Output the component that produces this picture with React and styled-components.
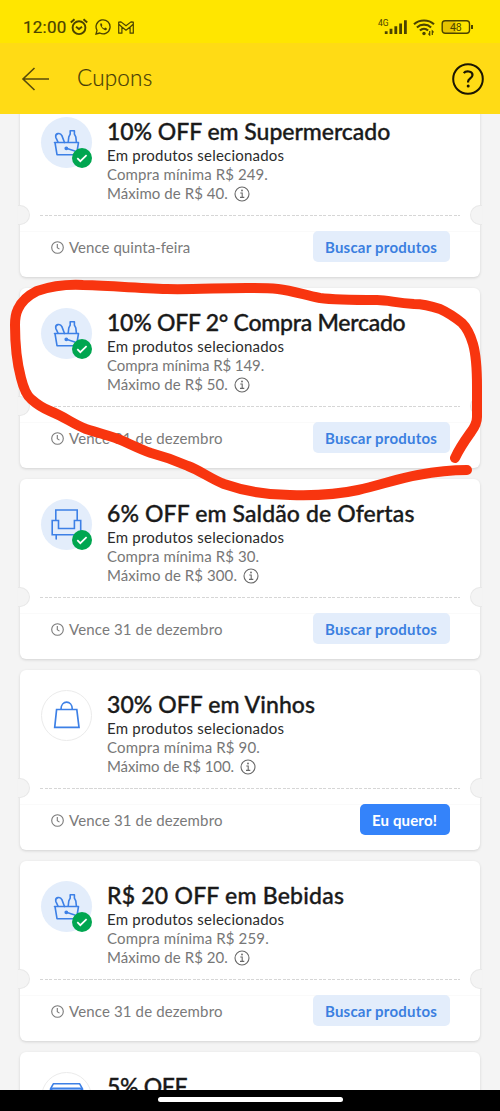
import React from 'react';
import styled, { createGlobalStyle } from 'styled-components';

const GlobalStyle = createGlobalStyle`
  * { box-sizing: border-box; }
  html, body { margin: 0; padding: 0; }
  body { background: #f4f4f4; font-family: Lato, "Liberation Sans", sans-serif; overflow: hidden; }
`;

const Screen = styled.div`
  position: relative;
  width: 500px;
  height: 1111px;
  display: flex;
  flex-direction: column;
  overflow: hidden;
  background: #f4f4f4;
`;

const StatusBar = styled.div`
  height: 43px;
  flex: none;
  display: flex;
  justify-content: space-between;
  padding: 15px 26px 0 23px;
  background: #ffe600;
`;

const StatusGroup = styled.div`
  display: flex;
  height: 24px;
  align-items: center;
`;

const Time = styled.span`
  width: 47px;
  font: 400 17px/24px Roboto, sans-serif;
  letter-spacing: 0.25px;
  color: #4b4300;
  -webkit-text-stroke: 0.2px #4b4300;
`;

const StatusIcon = styled.svg`
  display: block;
  flex: none;
  margin-left: ${(p) => p.$gap || 0}px;
`;

const Header = styled.header`
  height: 71px;
  flex: none;
  display: flex;
  align-items: center;
  padding: 0 15px 0 21px;
  background: #ffdb15;
`;

const PageTitle = styled.h1`
  flex: 1;
  margin: -2px 0 0 27px;
  font-size: 22.5px;
  font-weight: 300;
  line-height: 30px;
  letter-spacing: 0.2px;
  color: #463c08;
  -webkit-text-stroke: 0.2px #463c08;
`;

const CouponList = styled.main`
  flex: 1;
  min-height: 0;
  overflow: hidden;
  display: flex;
  flex-direction: column;
  padding: 0 20px;
`;

const Card = styled.article`
  position: relative;
  flex: none;
  height: 180px;
  margin-bottom: 11px;
  background: #fff;
  border-radius: 6px;
  box-shadow: 0 1px 3px rgba(0, 0, 0, 0.14);
  &:first-child { margin-top: -17px; }
`;

const CardBody = styled.div`
  height: 118px;
  display: flex;
  padding: 20px 20px 0 21px;
`;

const Emblem = styled.div`
  position: relative;
  width: 51px;
  height: 51px;
  flex: none;
  display: flex;
  align-items: center;
  justify-content: center;
  border-radius: 50%;
  background: ${(p) => (p.$active ? '#e3edfb' : '#fff')};
  border: ${(p) => (p.$active ? '0' : '1px solid #ebebeb')};
`;

const Badge = styled.svg`
  position: absolute;
  right: 0;
  bottom: 0;
`;

const Details = styled.div`
  margin-left: 15px;
  white-space: nowrap;
`;

const CouponTitle = styled.h2`
  margin: 0 0 4px;
  font-size: 23px;
  font-weight: 500;
  line-height: 25px;
  height: 25px;
  padding-top: 2px;
  letter-spacing: ${(p) => p.$track || 0}px;
  color: #1a1a1a;
  -webkit-text-stroke: 0.35px #1a1a1a;
`;

const Line = styled.p`
  display: flex;
  align-items: center;
  margin: 0;
  font-size: 15px;
  line-height: 19px;
  letter-spacing: ${(p) => p.$track ?? 0.22}px;
  color: ${(p) => (p.$strong ? '#2b2b2b' : '#777')};
`;

const InfoIcon = styled.svg`
  margin-left: 6px;
`;

const Perforation = styled.div`
  height: 1px;
  margin: 0 20px;
  background: repeating-linear-gradient(90deg, #d6d6d6 0 3px, transparent 3px 4.5px);
`;

const Notch = styled.span`
  position: absolute;
  top: 108px;
  ${(p) => p.$side}: -3px;
  width: 13px;
  height: 20px;
  background: #f4f4f4;
  border: 1px solid #e8e8e8;
  border-${(p) => p.$side}: 0;
  border-radius: ${(p) => (p.$side === 'left' ? '0 10px 10px 0' : '10px 0 0 10px')};
  clip-path: ${(p) => (p.$side === 'left' ? 'inset(0 0 0 1px)' : 'inset(0 1px 0 0)')};
`;

const CardFooter = styled.footer`
  height: 46px;
  margin-top: 15px;
  border-top: 1px solid #fafafa;
  display: flex;
  align-items: flex-start;
  justify-content: space-between;
  padding: 0 31px 0 31px;
`;

const Expiry = styled.div`
  display: flex;
  align-items: center;
  gap: 5px;
  height: 30px;
  font-size: 15px;
  line-height: 20px;
  letter-spacing: ${(p) => p.$track}px;
  color: #7a7a7a;
`;

const ActionButton = styled.button`
  width: ${(p) => (p.$primary ? 90 : 137)}px;
  height: 31px;
  margin: -1px -0.5px 0 0;
  padding: 0;
  border: 0;
  border-radius: 5px;
  font: 700 15px/30px Lato, "Liberation Sans", sans-serif;
  letter-spacing: ${(p) => (p.$primary ? 0.15 : 0.22)}px;
  color: ${(p) => (p.$primary ? '#fff' : '#3b7fe0')};
  background: ${(p) => (p.$primary ? '#3483fa' : '#e3edfb')};
`;

const Scribble = styled.svg`
  position: absolute;
  inset: 0;
  pointer-events: none;
`;

const NavBar = styled.div`
  height: 21px;
  flex: none;
  display: flex;
  justify-content: center;
  padding-top: 7px;
  background: #000;
`;

const HomePill = styled.span`
  width: 185px;
  height: 5px;
  border-radius: 3px;
  background: #fff;
`;

const blue = { fill: 'none', stroke: '#3d80e6', strokeWidth: 1.6, strokeLinejoin: 'round', strokeLinecap: 'round' };

const Basket = () => (
  <svg width="51" height="51" viewBox="0 0 51 51" {...blue}>
    <path d="M13.5 25.5h24M14 25.5l2 12.2h19.5l2-12.2z" />
    <path d="M17 25.2l-2.2-4.9c-.9-4 4.4-5.2 6.1-1.7l2.6 6.9M27.2 25.2l.6-5.4 1.4-2.6v-3.5h4.2v3.5l1.4 2.6.6 5.4" />
    <path d="M25.3 31.3l8.5 2.6" />
    <circle cx="25.3" cy="31.3" r="1.1" fill="#3d80e6" />
  </svg>
);

const Armchair = () => (
  <svg width="51" height="51" viewBox="0 0 51 51" {...blue} strokeLinejoin="miter">
    <path d="M14.8 21.2V11h21.4v10.2M17.5 29.5v-8H11.2v14.2h28.5V21.5h-6.3v8zM15.2 36v4" />
  </svg>
);

const Bag = () => (
  <svg width="49" height="49" viewBox="0 0 49 49" {...blue} strokeWidth="1.7" strokeLinejoin="miter">
    <path d="M14.6 18.5h20.2l2.2 17.8H12.7zM19 18.3c0-9.5 11.3-9.5 11.3 0" />
  </svg>
);

const Store = () => (
  <svg width="49" height="49" viewBox="0 0 49 49" {...blue}>
    <path d="M12 21v15h25V21" />
    <path d="M10 15.3h29l1.5 4.7h-32z" fill="#83aef0" />
    <path d="M11.3 10.8h26.4l2.8 5v4.5H8.5v-4.5z" />
  </svg>
);

const icons = { basket: Basket, armchair: Armchair, bag: Bag, store: Store };

const Clock = () => (
  <svg width="13" height="13" viewBox="0 0 13 13" fill="none" stroke="#7a7a7a" strokeWidth="1.1">
    <circle cx="6.5" cy="6.5" r="5.8" />
    <path d="M6.3 3v3.8l2.2 1.3" />
  </svg>
);

const Info = () => (
  <InfoIcon width="16" height="16" viewBox="0 0 16 16" fill="none" stroke="#686868" strokeWidth="1.1">
    <circle cx="8" cy="8" r="7" />
    <path d="M6.3 7h1.9v4.3M6 11.4h4.3" />
    <circle cx="8" cy="4.5" r=".9" fill="#686868" stroke="none" />
  </InfoIcon>
);

const Check = () => (
  <Badge width="20" height="20" viewBox="0 0 20 20">
    <circle cx="10" cy="10" r="10" fill="#00a650" />
    <path d="M5.3 10.2l3 3 6.3-6.1" fill="none" stroke="#fff" strokeWidth="1.7" />
  </Badge>
);

const coupons = [
  { icon: 'basket', active: true, title: '10% OFF em Supermercado', min: 'Compra mínima R$ 249.', max: 'Máximo de R$ 40.', expiry: 'Vence quinta-feira', track: [-0.04, 0.1, 0.06, 0.05] },
  { icon: 'basket', active: true, title: '10% OFF 2° Compra Mercado', min: 'Compra mínima R$ 149.', max: 'Máximo de R$ 50.', expiry: 'Vence 31 de dezembro', track: [-0.26, -0.08, 0.06, 0.14] },
  { icon: 'armchair', active: true, title: '6% OFF em Saldão de Ofertas', min: 'Compra mínima R$ 30.', max: 'Máximo de R$ 300.', expiry: 'Vence 31 de dezembro', track: [0.11, 0.1, 0.08, 0.14] },
  { icon: 'bag', active: false, title: '30% OFF em Vinhos', min: 'Compra mínima R$ 90.', max: 'Máximo de R$ 100.', expiry: 'Vence 31 de dezembro', track: [0.06, 0.14, -0.1, 0.14] },
  { icon: 'basket', active: true, title: 'R$ 20 OFF em Bebidas', min: 'Compra mínima R$ 259.', max: 'Máximo de R$ 20.', expiry: 'Vence 31 de dezembro', track: [0.22, 0.14, 0.06, 0.14] },
  { icon: 'store', active: false, title: '5% OFF', track: [-0.35] },
];

function Coupon({ icon, active, title, min, max, expiry, track }) {
  const Icon = icons[icon];
  return (
    <Card>
      <CardBody>
        <Emblem $active={active}>
          <Icon />
          {active && <Check />}
        </Emblem>
        <Details>
          <CouponTitle $track={track[0]}>{title}</CouponTitle>
          {min && (
            <>
              <Line $strong>Em produtos selecionados</Line>
              <Line $track={track[1]}>{min}</Line>
              <Line $track={track[2]}>{max}<Info /></Line>
            </>
          )}
        </Details>
      </CardBody>
      {min && (
        <>
          <Perforation />
          <Notch $side="left" />
          <Notch $side="right" />
          <CardFooter>
            <Expiry $track={track[3]}><Clock />{expiry}</Expiry>
            <ActionButton $primary={!active}>{active ? 'Buscar produtos' : 'Eu quero!'}</ActionButton>
          </CardFooter>
        </>
      )}
    </Card>
  );
}

const ink = '#4b4300';

export default function App() {
  return (
    <Screen>
      <GlobalStyle />
      <StatusBar>
        <StatusGroup>
          <Time>12:00</Time>
          <StatusIcon width="18" height="18" viewBox="0 0 18 18" fill="none" stroke={ink} strokeWidth="1.9">
            <circle cx="9" cy="9.7" r="6.4" />
            <path d="M.8 4.5L4.5 1.2M17.2 4.5L13.5 1.2M6 8.8l3 2.3 3-2.3" />
          </StatusIcon>
          <StatusIcon $gap={7} width="16" height="16" viewBox="0 0 16 16" fill="none" stroke={ink} strokeWidth="1.3">
            <path d="M1 15l1-3.7A7 7 0 1 1 4.8 14z" />
            <path d="M5.7 4.3c-1.9 1.8 2.5 7.2 5.2 6.9 1.2-.4 1.1-1.6.7-1.9l-1.4-.7-1 .9c-1.2-.4-2.2-1.5-2.5-2.4l.7-.9-.7-1.7z" fill={ink} stroke="none" />
          </StatusIcon>
          <StatusIcon $gap={7} width="16" height="13" viewBox="0 0 16 13" fill="none" stroke={ink} strokeWidth="1.2" strokeLinejoin="round">
            <path d="M.7 1.2v11h3.2V6L8 9.2 12.1 6v6.2h3.2v-11L13 .9 8 4.8 3 .9zM3.9 6L.8 3.2M12.1 6l3.1-2.8" />
          </StatusIcon>
        </StatusGroup>
        <StatusGroup>
          <StatusIcon width="31" height="20" viewBox="0 0 31 20">
            <text x="1" y="8.5" fontFamily="Roboto, sans-serif" fontSize="8.5" fill={ink}>4G</text>
            <g stroke={ink} strokeWidth="2.8" strokeLinecap="butt">
              <path d="M9.2 17v-2.7M14 17v-5.2M18.8 17V9.2M23.6 17V6.6M28.4 17V3.2" />
            </g>
          </StatusIcon>
          <StatusIcon $gap={5} width="22" height="18" viewBox="0 0 22 18" fill="none" stroke={ink} strokeWidth="2.1">
            <path d="M1 6.2c5.5-5 14.5-5 20 0M3.9 9.4c4-3.7 10.2-3.7 14.2 0M6.9 12.5c2.4-2.2 5.8-2.2 8.2 0" />
            <circle cx="11" cy="15.5" r="1.7" fill={ink} stroke="none" />
            <path d="M16.7 13v4l-1.3-1.4M19.3 17v-4l1.3 1.4" strokeWidth="1.2" />
          </StatusIcon>
          <StatusIcon $gap={6} width="33" height="16" viewBox="0 0 33 16">
            <rect x="2" y="2" width="13" height="12" rx="2" fill="#e6c400" />
            <rect x="1.2" y="1.7" width="27.3" height="12.6" rx="3" fill="none" stroke={ink} strokeWidth="1.4" />
            <path d="M31 6v4" stroke={ink} strokeWidth="2" />
            <text x="14.8" y="11.7" textAnchor="middle" fontFamily="Roboto, sans-serif" fontSize="10.5" fill={ink}>48</text>
          </StatusIcon>
        </StatusGroup>
      </StatusBar>
      <Header>
        <StatusIcon width="29" height="26" viewBox="0 0 29 26" fill="none" stroke="#584b0b" strokeWidth="1.6">
          <path d="M28 13H2M13.5 2L2 13l11.5 11" />
        </StatusIcon>
        <PageTitle>Cupons</PageTitle>
        <StatusIcon width="34" height="34" viewBox="0 0 34 34" fill="none" stroke="#1b1603" strokeWidth="2">
          <circle cx="17" cy="17" r="14.8" />
          <path d="M12.8 11.2c2-2.8 8.7-2.3 8.7 1.8 0 3.2-4.4 3.5-4.4 6.4v1" strokeWidth="2.2" />
          <circle cx="17.2" cy="24" r="1.5" fill="#1b1603" stroke="none" />
        </StatusIcon>
      </Header>
      <CouponList>
        {coupons.map((c) => <Coupon key={c.title} {...c} />)}
      </CouponList>
      <NavBar><HomePill /></NavBar>
      <Scribble width="500" height="1111" viewBox="0 0 500 1111" fill="none" stroke="#f8350f" strokeWidth="10" strokeLinecap="round" strokeLinejoin="round">
        <path d="M455 458C460 447 466 439 471 432Q477 424 477 417V387Q477 358 473 344Q469 330 462 323Q451 314 440 309Q425 304 414 304C395 303 389 300 377 300C350 300 335 300 320 298C304 295 294 291 278 289C245 286 200 290 167 289C135 288 100 285 83 285C65 284 49 287 37 291Q23 298 18 309Q15 315 15 325C15 350 17 363 21 378Q25 394 31 399Q40 407 50 411C65 417 73 424 86 429C101 434 112 436 123 441C134 446 142 450 151 453Q170 458 188 466C201 471 211 479 224 484C247 492 270 495 290 495C320 496 340 494 358 490C380 485 400 478 418 475Q445 470 467 470" />
      </Scribble>
    </Screen>
  );
}
